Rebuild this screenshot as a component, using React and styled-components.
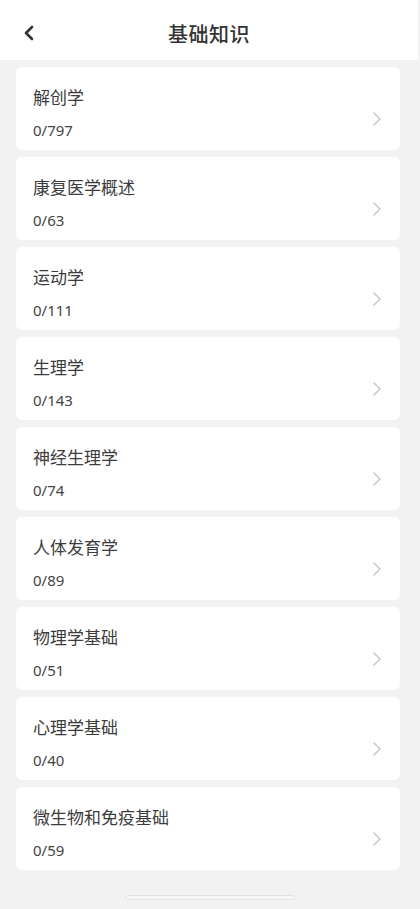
import React from "react";
import styled, { createGlobalStyle } from "styled-components";

const GlobalStyle = createGlobalStyle`
  html, body {
    margin: 0;
    padding: 0;
    background: #f2f2f2;
  }
  body {
    font-family: "Noto Sans CJK SC", "Noto Sans", sans-serif;
  }
`;

const subjects = [
  { name: "解创学", count: "0/797" },
  { name: "康复医学概述", count: "0/63" },
  { name: "运动学", count: "0/111" },
  { name: "生理学", count: "0/143" },
  { name: "神经生理学", count: "0/74" },
  { name: "人体发育学", count: "0/89" },
  { name: "物理学基础", count: "0/51" },
  { name: "心理学基础", count: "0/40" },
  { name: "微生物和免疫基础", count: "0/59" },
];

const App = () => {
  return (
    <Page>
      <GlobalStyle />
      <Header>
        <BackButton>
          <svg width="14" height="16" viewBox="0 0 14 16" fill="none">
            <path
              d="M10 2 L4 8 L10 14"
              stroke="#333"
              strokeWidth="2.6"
              strokeLinecap="round"
              strokeLinejoin="round"
            />
          </svg>
        </BackButton>
        <Title>基础知识</Title>
      </Header>
      <List>
        {subjects.map((s) => (
          <Card key={s.name}>
            <Info>
              <Name>{s.name}</Name>
              <Count>{s.count}</Count>
            </Info>
            <svg width="10" height="16" viewBox="0 0 10 16" fill="none">
              <path
                d="M2 2 L8 8 L2 14"
                stroke="#c4c4c4"
                strokeWidth="1.4"
                strokeLinecap="round"
                strokeLinejoin="round"
              />
            </svg>
          </Card>
        ))}
      </List>
      <HomeBar />
    </Page>
  );
};

export default App;

const Page = styled.div`
  width: 420px;
  min-height: 909px;
  background: #f2f2f2;
  display: flex;
  flex-direction: column;
`;

const Header = styled.div`
  height: 60px;
  background: #fff;
  margin-right: 2px;
  display: flex;
  align-items: center;
  justify-content: center;
  position: relative;
`;

const BackButton = styled.div`
  position: absolute;
  left: 22px;
  top: 25px;
  display: flex;
`;

const Title = styled.div`
  font-size: 20px;
  font-weight: 500;
  color: #333;
  letter-spacing: 0.5px;
  margin-top: 6px;
`;

const List = styled.div`
  display: flex;
  flex-direction: column;
  gap: 7px;
  padding: 7px 20px 0 16px;
`;

const Card = styled.div`
  height: 83px;
  background: #fff;
  border-radius: 6px;
  display: flex;
  align-items: center;
  justify-content: space-between;
  padding: 8px 18px 0 17px;
  box-sizing: border-box;
  svg {
    margin-top: 12px;
  }
`;

const Info = styled.div`
  display: flex;
  flex-direction: column;
`;

const Name = styled.div`
  font-size: 17px;
  line-height: 24px;
  color: #3c3c3c;
`;

const Count = styled.div`
  font-family: "Noto Sans", sans-serif;
  font-size: 15px;
  line-height: 20px;
  color: #444;
  margin-top: 11px;
`;

const HomeBar = styled.div`
  width: 168px;
  height: 3px;
  border: 1px solid #e2e2e2;
  border-radius: 3px;
  background: #f6f6f6;
  margin: 25px auto 0;
`;
